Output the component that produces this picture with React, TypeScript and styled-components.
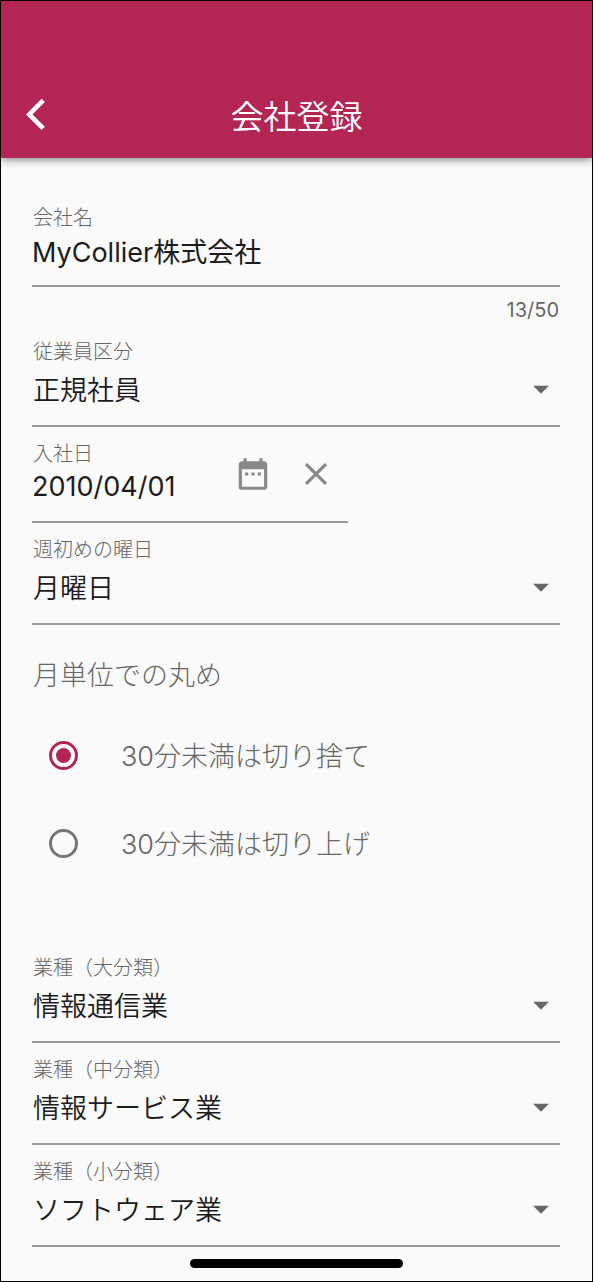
import React, { useState } from "react";
import styled, { createGlobalStyle } from "styled-components";
import { MdArrowDropDown, MdClose, MdDateRange } from "react-icons/md";

const color = {
  brand: "#b32552",
  surface: "#fafafa",
  text: "#1c1c1c",
  muted: "#666666",
  icon: "#888888",
  line: "#9b9b9b",
};

const GlobalStyle = createGlobalStyle`
  *, *::before, *::after { box-sizing: border-box; }
  body {
    margin: 0;
    background: ${color.surface};
    color: ${color.text};
    font-family: Inter, "Noto Sans CJK JP", sans-serif;
    font-weight: 300;
  }
  button, input, select { font: inherit; color: inherit; }
`;

const Screen = styled.div`
  display: flex;
  flex-direction: column;
  min-height: 100vh;
  border: 1px solid #000;
`;

const AppBar = styled.header`
  display: grid;
  grid-template-columns: 72px 1fr 72px;
  align-items: center;
  padding-top: 69px;
  background: ${color.brand};
  color: #fff;
  box-shadow: 0 2px 8px rgba(0, 0, 0, 0.45);
`;

const BackButton = styled.button`
  display: flex;
  align-items: center;
  height: 88px;
  padding: 0 0 0 24px;
  border: 0;
  background: none;
`;

const Title = styled.h1`
  margin: 0;
  padding-top: 5px;
  font-size: 33px;
  line-height: 48px;
  font-weight: 350;
  text-align: center;
`;

const Form = styled.form`
  display: flex;
  flex-direction: column;
  padding: 33px 32px 0 31px;
`;

const Field = styled.div`
  display: flex;
  flex-direction: column;
  padding: 13px 0 11px;
  border-bottom: 2px solid ${color.line};
`;

const FieldLabel = styled.label`
  padding-left: 1px;
  font-size: 20px;
  line-height: 28px;
  color: ${color.muted};
`;

const TextInput = styled.input`
  width: 100%;
  height: 36px;
  margin-bottom: 6px;
  padding: 0;
  border: 0;
  outline: 0;
  background: none;
  font-size: 27px;
  font-weight: 400;
`;

const Counter = styled.div`
  padding: 11px 1px 3px;
  font-size: 20px;
  font-weight: 400;
  line-height: 24px;
  color: ${color.muted};
  text-align: right;
`;

const SelectBox = styled.div`
  display: grid;
  grid-template-columns: 1fr 38px;
  align-items: center;

  select {
    grid-area: 1 / 1 / 2 / 3;
    height: 48px;
    padding: 0 0 0 1px;
    border: 0;
    outline: 0;
    appearance: none;
    background: none;
    font-size: 27px;
    font-weight: 350;
  }

  svg {
    grid-area: 1 / 2;
    margin-bottom: 3px;
    color: ${color.muted};
    pointer-events: none;
  }
`;

const DateField = styled.div`
  display: flex;
  align-items: center;
  width: calc(60% - 1px);
  border-bottom: 2px solid ${color.line};
`;

const DateText = styled.div`
  display: flex;
  flex: 1;
  flex-direction: column;
  min-width: 0;
  padding: 13px 0 11px;
`;

const IconButton = styled.button`
  display: flex;
  align-items: center;
  justify-content: center;
  width: 63px;
  height: 63px;
  padding: 0;
  border: 0;
  background: none;
  color: ${color.icon};
`;

const RadioGroup = styled.fieldset`
  margin: 0;
  padding: 30px 0 54px;
  border: 0;
  color: ${color.muted};
  font-size: 27px;
`;

const Legend = styled.div`
  padding: 0 0 14px 1px;
  line-height: 42px;
`;

const RadioRow = styled.label`
  display: flex;
  align-items: center;
  gap: 43px;
  height: 88px;
  padding-left: 17px;
`;

const RadioText = styled.span`
  padding-bottom: 2px;
`;

const Radio = styled.input`
  display: grid;
  place-content: center;
  appearance: none;
  width: 29px;
  height: 29px;
  margin: 0;
  border: 3px solid #757575;
  border-radius: 50%;

  &:checked { border-color: ${color.brand}; }

  &:checked::before {
    content: "";
    width: 15px;
    height: 15px;
    border-radius: 50%;
    background: ${color.brand};
  }
`;

const HomeIndicator = styled.div`
  width: 36%;
  height: 9px;
  margin: 12px auto;
  border-radius: 5px;
  background: #000;
`;

type SelectFieldProps = { id: string; label: string; options: string[] };

function SelectField({ id, label, options }: SelectFieldProps) {
  return (
    <Field>
      <FieldLabel htmlFor={id}>{label}</FieldLabel>
      <SelectBox>
        <select id={id}>
          {options.map((option) => (
            <option key={option}>{option}</option>
          ))}
        </select>
        <MdArrowDropDown size={38} />
      </SelectBox>
    </Field>
  );
}

const roundingOptions = ["30分未満は切り捨て", "30分未満は切り上げ"];
const nameLimit = 50;

export default function App() {
  const [name, setName] = useState("MyCollier株式会社");
  const [joined, setJoined] = useState("2010/04/01");
  const [rounding, setRounding] = useState(roundingOptions[0]);

  return (
    <Screen lang="ja">
      <GlobalStyle />
      <AppBar>
        <BackButton type="button" aria-label="戻る">
          <svg width="22" height="34" viewBox="0 0 22 34" fill="none" stroke="#fff" strokeWidth="4.6">
            <path d="M18.2 3.4 4.2 17.4l14 14" />
          </svg>
        </BackButton>
        <Title>会社登録</Title>
      </AppBar>
      <Form>
        <Field>
          <FieldLabel htmlFor="company">会社名</FieldLabel>
          <TextInput
            id="company"
            value={name}
            maxLength={nameLimit}
            onChange={(e) => setName(e.target.value)}
          />
        </Field>
        <Counter>{name.length}/{nameLimit}</Counter>
        <SelectField id="employment" label="従業員区分" options={["正規社員"]} />
        <DateField>
          <DateText>
            <FieldLabel htmlFor="joined">入社日</FieldLabel>
            <TextInput id="joined" value={joined} onChange={(e) => setJoined(e.target.value)} />
          </DateText>
          <IconButton type="button" aria-label="日付を選択">
            <MdDateRange size={38} />
          </IconButton>
          <IconButton type="button" aria-label="クリア" onClick={() => setJoined("")}>
            <MdClose size={38} />
          </IconButton>
        </DateField>
        <SelectField id="weekstart" label="週初めの曜日" options={["月曜日"]} />
        <RadioGroup aria-labelledby="rounding-title">
          <Legend id="rounding-title">月単位での丸め</Legend>
          {roundingOptions.map((option) => (
            <RadioRow key={option}>
              <Radio
                type="radio"
                name="rounding"
                checked={rounding === option}
                onChange={() => setRounding(option)}
              />
              <RadioText>{option}</RadioText>
            </RadioRow>
          ))}
        </RadioGroup>
        <SelectField id="industry-large" label="業種（大分類）" options={["情報通信業"]} />
        <SelectField id="industry-middle" label="業種（中分類）" options={["情報サービス業"]} />
        <SelectField id="industry-small" label="業種（小分類）" options={["ソフトウェア業"]} />
      </Form>
      <HomeIndicator />
    </Screen>
  );
}
